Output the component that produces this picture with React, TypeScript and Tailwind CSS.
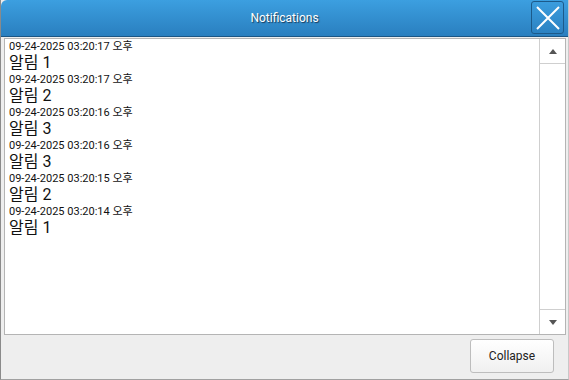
import React from 'react';

type Note = { time: string; title: string };

const notes: Note[] = [
  { time: '09-24-2025 03:20:17 오후', title: '알림 1' },
  { time: '09-24-2025 03:20:17 오후', title: '알림 2' },
  { time: '09-24-2025 03:20:16 오후', title: '알림 3' },
  { time: '09-24-2025 03:20:16 오후', title: '알림 3' },
  { time: '09-24-2025 03:20:15 오후', title: '알림 2' },
  { time: '09-24-2025 03:20:14 오후', title: '알림 1' },
];

const font = "font-['Roboto','Noto_Sans_CJK_KR',sans-serif]";

const App: React.FC = () => {
  return (
    <div className={`w-[569px] h-[380px] flex flex-col bg-[#eeeeee] border-l border-b border-r border-l-[#8a8a8a] border-b-[#a0a0a0] border-r-[#c8c8c8] ${font}`}>
      {/* Title bar */}
      <div className="relative h-[37px] shrink-0 flex items-center justify-center rounded-tl-[6px] bg-gradient-to-b from-[#3c9fe0] to-[#2a7fbf] border-b border-[#1b5684]">
        <span className="text-[12px] text-white [text-shadow:1px_1px_1px_#1a3a55]">Notifications</span>
        <button className="absolute right-[4px] top-[1px] w-[33px] h-[33px] rounded-[3px] border border-[#1c5a8a] flex items-center justify-center">
          <svg width="24" height="24" viewBox="0 0 24 24">
            <path d="M1 1L23 23M23 1L1 23" stroke="white" strokeWidth="2" />
          </svg>
        </button>
      </div>

      {/* List */}
      <div className="flex-1 mt-[1px] ml-[3px] mr-[2px] flex border border-[#b4b4b4] bg-white min-h-0">
        <div className="flex-1 pl-[4px] pt-[1px] text-[#111]">
          {notes.map((n, i) => (
            <div key={i}>
              <div className="text-[11px] leading-[13px]">{n.time}</div>
              <div className="text-[16px] leading-[20px]">{n.title}</div>
            </div>
          ))}
        </div>
        <div className="w-[26px] flex flex-col border-l border-[#cfcfcf] bg-white">
          <div className="h-[25px] flex items-center justify-center border-b border-[#cfcfcf]">
            <svg width="8" height="5" viewBox="0 0 8 5"><path d="M4 0L8 5H0Z" fill="#555" /></svg>
          </div>
          <div className="flex-1" />
          <div className="h-[25px] flex items-center justify-center border-t border-[#cfcfcf]">
            <svg width="8" height="5" viewBox="0 0 8 5"><path d="M0 0H8L4 5Z" fill="#555" /></svg>
          </div>
        </div>
      </div>

      {/* Footer */}
      <div className="h-[44px] shrink-0 flex items-start justify-end pt-[4px] pr-[14px]">
        <button className="w-[84px] h-[34px] rounded-[3px] border border-[#bdbdbd] bg-gradient-to-b from-white to-[#f0f0f0] text-[12px] text-[#222]">
          Collapse
        </button>
      </div>
    </div>
  );
};

export default App;
